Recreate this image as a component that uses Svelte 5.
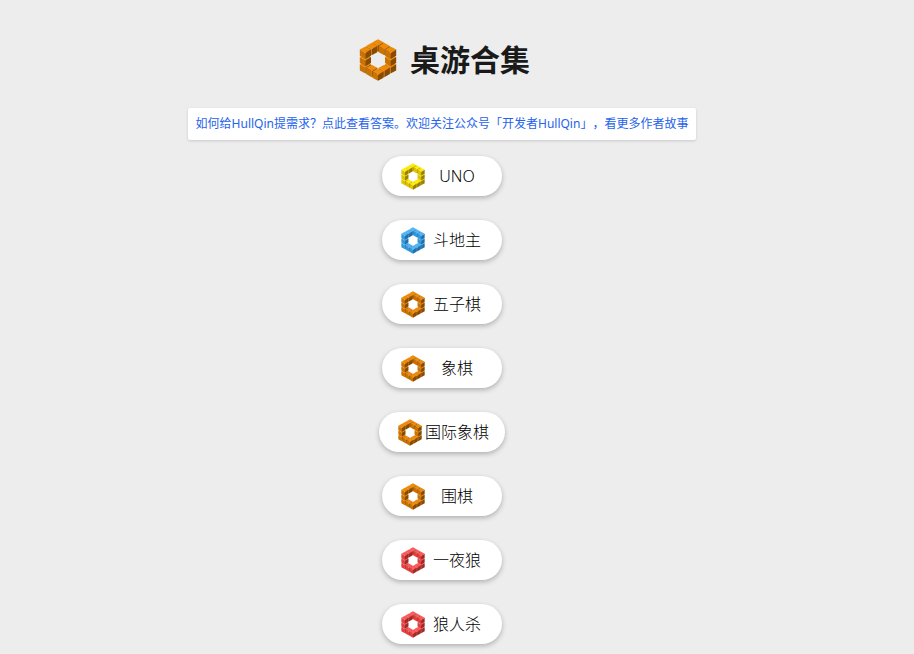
<script lang="ts">
  type Tone = { top: string; left: string; right: string };

  const orange: Tone = { top: "#ee8a0a", left: "#ca7202", right: "#8a4a00" };
  const yellow: Tone = { top: "#ffec08", left: "#dec402", right: "#988200" };
  const blue: Tone = { top: "#52b4f6", left: "#3498dc", right: "#2470a8" };
  const red: Tone = { top: "#fc5a5a", left: "#e04040", right: "#a02a2a" };

  const games = [
    { name: "UNO", tone: yellow },
    { name: "斗地主", tone: blue },
    { name: "五子棋", tone: orange },
    { name: "象棋", tone: orange },
    { name: "国际象棋", tone: orange },
    { name: "围棋", tone: orange },
    { name: "一夜狼", tone: red },
    { name: "狼人杀", tone: red },
  ];

  // ring of 12 blocks running along the edges of a 3x3x3 cube
  const ring = [
    [2, 2, 0], [1, 2, 0], [0, 2, 0],
    [0, 2, 1], [0, 2, 2], [0, 1, 2],
    [0, 0, 2], [1, 0, 2], [2, 0, 2],
    [2, 0, 1], [2, 0, 0], [2, 1, 0],
  ];

  // isometric projection, far blocks are drawn first
  const blocks = ring
    .sort((a, b) => a[0] + a[1] + a[2] - (b[0] + b[1] + b[2]))
    .map(([x, y, z]) => ({ x: (x - y) * 19.2, y: (x + y) * 11.1 - z * 22.2 }));
</script>

{#snippet logo(tone: Tone)}
  <svg class="logo" viewBox="-56 -64 112 128" aria-hidden="true">
    {#each blocks as block}
      <g transform="translate({block.x} {block.y})">
        <path fill={tone.top} d="M0-19 17-9.5 0 .5-17-9.5Z" />
        <path fill={tone.left} d="M-17-9.5 0 .5V19L-17 9.5Z" />
        <path fill={tone.right} d="M17-9.5 0 .5V19L17 9.5Z" />
      </g>
    {/each}
  </svg>
{/snippet}

<main>
  <header>
    <span class="brand">{@render logo(orange)}</span>
    <h1>桌游合集</h1>
  </header>

  <a class="notice" href="#about"
    >如何给HullQin提需求？点此查看答案。欢迎关注公众号「开发者HullQin」，看更多作者故事</a
  >

  <nav>
    {#each games as game}
      <button type="button">
        <span class="icon">{@render logo(game.tone)}</span>
        <span class="name">{game.name}</span>
      </button>
    {/each}
  </nav>
</main>

<style>
  :global(body) {
    background: #ededed;
  }

  main {
    display: flex;
    flex-direction: column;
    align-items: center;
    padding: 36px 30px 10px 0;
    color: #1a1a1a;
    font-family: "Noto Sans", "Noto Sans CJK SC", sans-serif;
    font-weight: 300;
    text-spacing-trim: space-all;
  }

  header {
    display: flex;
    align-items: center;
    gap: 8px;
    height: 48px;
  }

  h1 {
    margin: 0;
    font-size: 30px;
    line-height: 48px;
    font-weight: 700;
  }

  .logo {
    display: block;
    width: 100%;
    height: 100%;
  }

  .brand {
    width: 48px;
    height: 42px;
  }

  .notice {
    box-sizing: border-box;
    margin-top: 24px;
    padding: 6px 8px;
    border-radius: 2px;
    background: #ffffff;
    box-shadow: 0 1px 3px rgba(0, 0, 0, 0.15);
    color: #2563eb;
    font-size: 12px;
    font-weight: 400;
    line-height: 20px;
    text-decoration: none;
  }

  nav {
    display: flex;
    flex-direction: column;
    align-items: center;
    gap: 24px;
    margin-top: 16px;
  }

  button {
    display: flex;
    align-items: center;
    min-width: 120px;
    height: 40px;
    padding: 0 16px;
    border: none;
    border-radius: 20px;
    background: #ffffff;
    box-shadow: 0 2px 5px rgba(0, 0, 0, 0.26);
    color: #000000;
    font: inherit;
    font-size: 16px;
    line-height: 24px;
    cursor: pointer;
  }

  .icon {
    width: 30px;
    height: 27px;
  }

  .name {
    flex: 1;
    text-align: center;
  }
</style>
